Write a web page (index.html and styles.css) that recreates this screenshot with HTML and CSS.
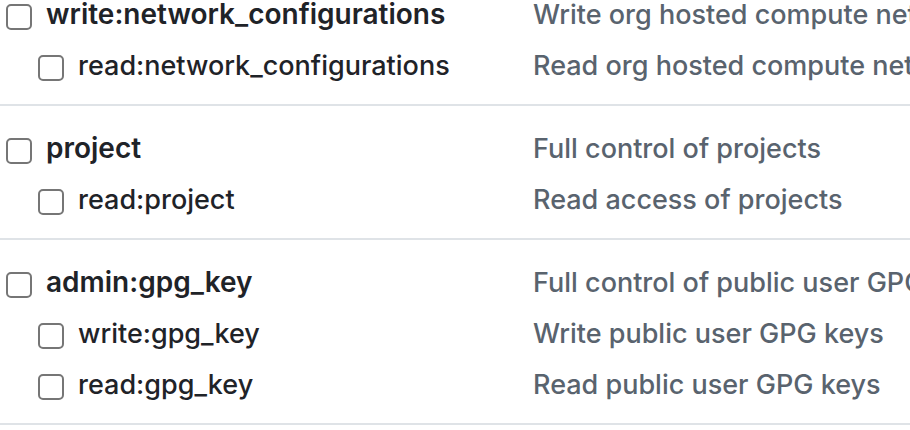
FILE: index.html
```html
<!DOCTYPE html>
<html lang="en">
<head>
<meta charset="utf-8">
<title>Token scopes</title>
<link rel="stylesheet" href="styles.css">
</head>
<body>
<main class="scopes">
  <ul class="group">
    <li class="scope parent"><label class="name"><input type="checkbox">write:network_configurations</label><span class="description">Write org hosted compute network configurations</span></li>
    <li class="scope child"><label class="name"><input type="checkbox">read:network_configurations</label><span class="description">Read org hosted compute network configurations</span></li>
  </ul>
  <ul class="group">
    <li class="scope parent"><label class="name"><input type="checkbox">project</label><span class="description">Full control of projects</span></li>
    <li class="scope child"><label class="name"><input type="checkbox">read:project</label><span class="description">Read access of projects</span></li>
  </ul>
  <ul class="group">
    <li class="scope parent"><label class="name"><input type="checkbox">admin:gpg_key</label><span class="description">Full control of public user GPG keys</span></li>
    <li class="scope child"><label class="name"><input type="checkbox">write:gpg_key</label><span class="description">Write public user GPG keys</span></li>
    <li class="scope child"><label class="name"><input type="checkbox">read:gpg_key</label><span class="description">Read public user GPG keys</span></li>
  </ul>
</main>
</body>
</html>
```
FILE: styles.css
```css
* {
  box-sizing: border-box;
}

body {
  margin: 0;
  overflow: hidden;
  background: #fff;
  color: #1f2328;
  font: 450 27px/51px Inter, "Liberation Sans", sans-serif;
}

.scopes {
  margin-top: -28px;
}

.group {
  margin: 0;
  padding: 17px 0 13px;
  border-bottom: 2px solid #dfe3e7;
  list-style: none;
}

.scope {
  display: grid;
  grid-template-columns: 533px minmax(0, 1fr);
  white-space: nowrap;
}

.name {
  display: flex;
  align-items: center;
  gap: 14px;
  padding-left: 6px;
}

.parent .name {
  font-size: 28px;
  font-weight: 600;
}

.child .name {
  padding-left: 38px;
}

.name input {
  appearance: none;
  flex: none;
  width: 26px;
  height: 26px;
  margin: 4px 0 0;
  border: 2px solid #767676;
  border-radius: 5px;
  background: #fff;
}

.name input:checked {
  background: #0969da;
}

.description {
  overflow: hidden;
  color: #59636e;
}
```
